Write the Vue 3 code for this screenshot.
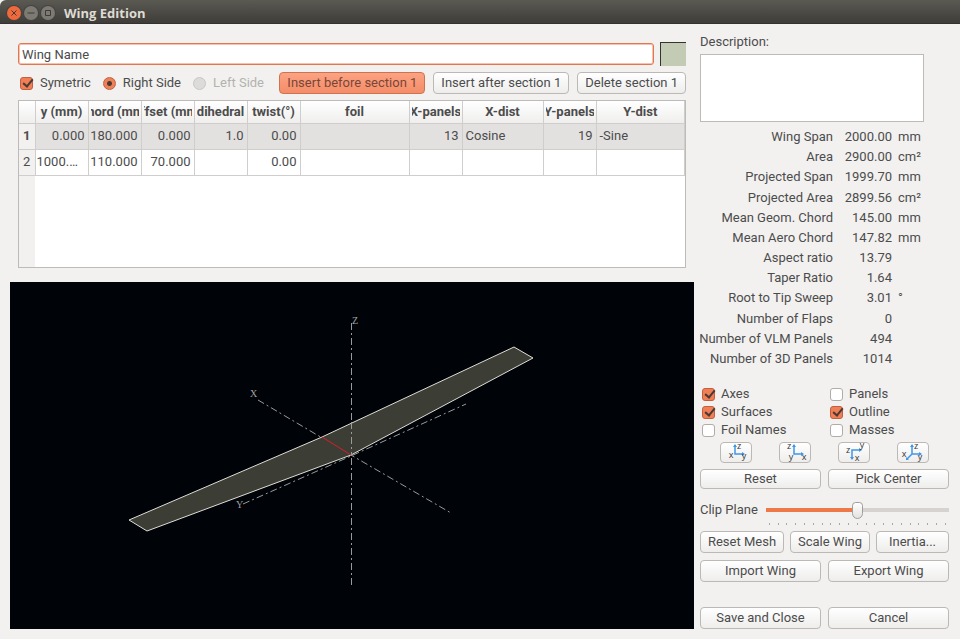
<script setup>
import { ref } from 'vue'

const wingName = ref('Wing Name')
const description = ref('')
const symetric = ref(true)
const side = ref('right')
const clip = ref(50)

const columns = [
  { label: 'y (mm)', cls: 'w-s' },
  { label: 'chord (mm)', cls: 'w-s' },
  { label: 'offset (mm)', cls: 'w-s' },
  { label: 'dihedral', cls: 'w-s' },
  { label: 'twist(°)', cls: 'w-s' },
  { label: 'foil', cls: 'w-l' },
  { label: 'X-panels', cls: 'w-s' },
  { label: 'X-dist', cls: 'w-m' },
  { label: 'Y-panels', cls: 'w-s' },
  { label: 'Y-dist', cls: 'w-a' },
]

const sections = [
  ['0.000', '180.000', '0.000', '1.0', '0.00', '', '13', 'Cosine', '19', '-Sine'],
  ['1000.000', '110.000', '70.000', '', '0.00', '', '', '', '', ''],
]

const stats = [
  ['Wing Span', '2000.00', 'mm'],
  ['Area', '2900.00', 'cm²'],
  ['Projected Span', '1999.70', 'mm'],
  ['Projected Area', '2899.56', 'cm²'],
  ['Mean Geom. Chord', '145.00', 'mm'],
  ['Mean Aero Chord', '147.82', 'mm'],
  ['Aspect ratio', '13.79', ''],
  ['Taper Ratio', '1.64', ''],
  ['Root to Tip Sweep', '3.01', '°'],
  ['Number of Flaps', '0', ''],
  ['Number of VLM Panels', '494', ''],
  ['Number of 3D Panels', '1014', ''],
]

const display = ref([
  { label: 'Axes', on: true },
  { label: 'Panels', on: false },
  { label: 'Surfaces', on: true },
  { label: 'Outline', on: true },
  { label: 'Foil Names', on: false },
  { label: 'Masses', on: false },
])

const views = [
  { name: 'X view', d: 'M14 2V11H23', a: 'M12 4L14 1L16 4ZM21 9L24 11L21 13Z', t: [['z', 18, 6], ['x', 10, 15], ['y', 23, 16]] },
  { name: 'Y view', d: 'M14 2V11H23', a: 'M12 4L14 1L16 4ZM21 9L24 11L21 13Z', t: [['z', 9, 6], ['y', 11, 17], ['x', 24, 17]] },
  { name: 'Z view', d: 'M22 7H13V16', a: 'M20 5L23 7L20 9ZM11 14L13 17L15 14Z', t: [['y', 23, 5], ['z', 9, 10], ['x', 18, 18]] },
  { name: 'Isometric view', d: 'M14 2V11H23M14 11L9 16', a: 'M12 4L14 1L16 4ZM21 9L24 11L21 13ZM8 14L8 17L11 17Z', t: [['z', 18, 6], ['x', 6, 14], ['y', 22, 17]] },
]
</script>

<template>
  <div class="window">
    <header class="titlebar">
      <button class="dot close" aria-label="Close">
        <svg viewBox="0 0 14 14"><path d="M4.5 4.5l5 5M9.5 4.5l-5 5" /></svg>
      </button>
      <button class="dot" aria-label="Minimize">
        <svg viewBox="0 0 14 14"><path d="M3.5 7h7" /></svg>
      </button>
      <button class="dot" aria-label="Maximize">
        <svg viewBox="0 0 14 14"><path d="M4.5 4.5h5v5h-5z" /></svg>
      </button>
      <h1>Wing Edition</h1>
    </header>

    <main>
      <section class="left">
        <div class="editor">
          <div class="name-row">
            <input v-model="wingName" class="name" type="text" aria-label="Wing name" />
            <button class="swatch" aria-label="Wing color"></button>
          </div>

          <div class="options">
            <label class="opt"><input v-model="symetric" type="checkbox" />Symetric</label>
            <label class="opt"><input v-model="side" type="radio" name="side" value="right" />Right Side</label>
            <label class="opt off"><input v-model="side" type="radio" name="side" value="left" disabled />Left Side</label>
            <div class="actions">
              <button class="btn hot">Insert before section 1</button>
              <button class="btn">Insert after section 1</button>
              <button class="btn">Delete section 1</button>
            </div>
          </div>

          <div class="table-box">
            <table>
              <colgroup>
                <col class="w-n" />
                <col v-for="c in columns" :key="c.label" :class="c.cls" />
              </colgroup>
              <thead>
                <tr>
                  <th></th>
                  <th v-for="c in columns" :key="c.label">
                    <div class="clip"><span>{{ c.label }}</span></div>
                  </th>
                </tr>
              </thead>
              <tbody>
                <tr v-for="(row, i) in sections" :key="i" :class="{ current: i === 0 }">
                  <th scope="row">{{ i + 1 }}</th>
                  <td v-for="(v, j) in row" :key="j" :class="{ text: j === 7 || j === 9 }">{{ v }}</td>
                </tr>
              </tbody>
            </table>
            <div class="gutter"></div>
          </div>
        </div>

        <div class="view">
          <svg viewBox="0 0 684 347" preserveAspectRatio="xMidYMid meet">
            <g class="axis">
              <path d="M341.5 41V304" />
              <path d="M248 118L341 173L441 231" />
              <path d="M233 222L341 174L456 122" />
            </g>
            <path class="wing" d="M119 238L312 155L504 65L523 76L341 173L137 249Z" />
            <path class="axis" d="M341.5 140V173" />
            <path class="root" d="M312 155L341 173" />
            <text x="342" y="42">Z</text>
            <text x="240" y="115">X</text>
            <text x="226" y="226">Y</text>
          </svg>
        </div>
      </section>

      <aside class="right">
        <label class="desc" for="desc">Description:</label>
        <textarea id="desc" v-model="description"></textarea>

        <dl class="stats">
          <div v-for="s in stats" :key="s[0]">
            <dt>{{ s[0] }}</dt>
            <dd>{{ s[1] }}</dd>
            <dd class="unit">{{ s[2] }}</dd>
          </div>
        </dl>

        <div class="checks">
          <label v-for="d in display" :key="d.label" class="opt">
            <input v-model="d.on" type="checkbox" />{{ d.label }}
          </label>
        </div>

        <div class="views">
          <button v-for="v in views" :key="v.name" class="btn" :aria-label="v.name">
            <svg viewBox="0 0 30 19">
              <path :d="v.d" />
              <path class="tip" :d="v.a" />
              <text v-for="t in v.t" :key="t[0]" :x="t[1]" :y="t[2]">{{ t[0] }}</text>
            </svg>
          </button>
        </div>

        <div class="pair reset">
          <button class="btn">Reset</button>
          <button class="btn">Pick Center</button>
        </div>

        <div class="clip-row">
          <label for="clip">Clip Plane</label>
          <div class="slider">
            <input id="clip" v-model="clip" type="range" min="0" max="100" />
            <div class="ticks"><i v-for="n in 21" :key="n"></i></div>
          </div>
        </div>

        <div class="tools">
          <button class="btn">Reset Mesh</button>
          <button class="btn">Scale Wing</button>
          <button class="btn">Inertia...</button>
        </div>
        <div class="pair files">
          <button class="btn">Import Wing</button>
          <button class="btn">Export Wing</button>
        </div>
        <div class="pair">
          <button class="btn">Save and Close</button>
          <button class="btn">Cancel</button>
        </div>
      </aside>
    </main>
  </div>
</template>

<style>
body {
  margin: 0;
  background: #f2f1f0;
}
</style>

<style scoped>
* {
  box-sizing: border-box;
}
.window {
  display: flex;
  flex-direction: column;
  min-height: 100vh;
  background: #f2f1f0;
  border-radius: 6px 0 0 0;
  overflow: hidden;
  color: #4c4c4c;
  font: 13px/18px Roboto, "Open Sans", sans-serif;
}
button,
input,
textarea {
  font: inherit;
  color: inherit;
  margin: 0;
}
.titlebar {
  display: flex;
  align-items: center;
  gap: 3px;
  height: 24px;
  padding: 2px 7px 0;
  background: linear-gradient(#5a5952, #3e3d39);
  border-bottom: 1px solid #33322e;
}
.titlebar h1 {
  margin: 0 0 0 6px;
  font: 700 13px/18px "Open Sans", sans-serif;
  color: #dfdbd2;
}
.dot {
  width: 14px;
  height: 14px;
  padding: 0;
  border: 0;
  border-radius: 50%;
  background: #7c7a72;
  box-shadow: 0 0 0 1px #45443f;
}
.dot.close {
  background: #f0693c;
}
.dot svg {
  display: block;
  fill: none;
  stroke: #3c3b37;
  stroke-width: 1;
}
main {
  flex: 1;
  display: flex;
  gap: 6px;
  padding: 9px 11px 10px 10px;
}
.left {
  flex: 1;
  min-width: 0;
  display: flex;
  flex-direction: column;
}
.editor {
  padding: 9px 8px 14px;
}
.name-row {
  display: flex;
  align-items: center;
  gap: 6px;
}
.name {
  flex: 1;
  min-width: 0;
  height: 22px;
  padding: 0 3px;
  border: 1px solid #e2764f;
  border-radius: 3px;
  background: #fff;
  box-shadow: 0 0 0 1px #f3c3b0 inset;
  outline: 0;
}
.swatch {
  width: 26px;
  height: 24px;
  padding: 0;
  border: 0;
  border-top: 1px solid #333;
  border-left: 1px solid #333;
  background: #c3cbb4;
}
.options {
  display: flex;
  align-items: center;
  gap: 12px;
  margin: 6px 0;
  padding-left: 2px;
}
.opt {
  display: flex;
  align-items: center;
  gap: 6px;
  white-space: nowrap;
}
.options .opt {
  gap: 7px;
}
.opt.off {
  color: #b4b2af;
}
.opt input {
  appearance: none;
  flex: none;
  width: 13px;
  height: 13px;
  border: 1px solid #b0aca8;
  border-radius: 3px;
  background: #fff;
}
.opt input[type="radio"] {
  border-radius: 50%;
}
.opt input:checked {
  border-color: #c0603f;
  background: #f07f56;
}
.opt input[type="radio"]:checked {
  background: radial-gradient(circle, #4a3a34 2px, #f07f56 3px);
}
.opt input:disabled {
  border-color: #c9c7c4;
  background: #dddbd9;
}
.opt input[type="checkbox"]:checked::after {
  content: "";
  display: block;
  width: 4px;
  height: 8px;
  margin: -1px 0 0 4px;
  border: solid #4a3a34;
  border-width: 0 2px 2px 0;
  transform: rotate(40deg);
}
.actions {
  display: flex;
  flex: 1;
  justify-content: flex-end;
  gap: 8px;
}
.btn {
  height: 22px;
  padding: 0 7px;
  border: 1px solid #bcb8b4;
  border-radius: 4px;
  background: linear-gradient(#fff, #eeedec);
  white-space: nowrap;
  line-height: 18px;
}
.btn.hot {
  border-color: #cc7450;
  background: linear-gradient(#fca283, #f48d68);
  color: #7a4636;
}
.table-box {
  display: flex;
  flex-direction: column;
  height: 168px;
  border: 1px solid #bdbab7;
  background: #fff;
}
table {
  width: 100%;
  table-layout: fixed;
  border-collapse: collapse;
}
.w-n { width: 16px; }
.w-s { width: 53px; }
.w-m { width: 81px; }
.w-l { width: 109px; }
th,
td {
  height: 26px;
  padding: 0 3px 0 1px;
  border: solid #d0cecc;
  border-width: 0 1px 1px 0;
  overflow: hidden;
  text-overflow: ellipsis;
  white-space: nowrap;
  text-align: right;
}
thead th {
  height: 22px;
  padding: 0 2px;
  background: linear-gradient(#fff, #efeeed);
}
.clip {
  display: flex;
  justify-content: center;
  overflow: hidden;
}
th[scope="row"] {
  padding: 0;
  background: #f2f1f0;
  text-align: center;
  font-weight: 400;
}
.current th[scope="row"] {
  font-weight: 700;
}
.current td {
  background: #e3e1e0;
}
td.text {
  text-align: left;
  padding-left: 3px;
}
.gutter {
  flex: 1;
  width: 16px;
  background: #f2f1f0;
}
.view {
  flex: 1;
  background: #000408;
}
.view svg {
  display: block;
  width: 100%;
}
.axis {
  fill: none;
  stroke: #9a9a9a;
  stroke-width: 1;
  stroke-dasharray: 7 3 2 3;
}
.wing {
  fill: #3c3d34;
  stroke: #deded8;
  stroke-width: 1;
}
.root {
  stroke: #d81e28;
  stroke-width: 1;
}
.view text {
  fill: #a0a0a0;
  font: 10px "Liberation Serif", serif;
}
.right {
  width: 249px;
  display: flex;
  flex-direction: column;
}
.desc {
  margin-bottom: 3px;
}
textarea {
  width: 224px;
  height: 68px;
  border: 1px solid #bdbab7;
  background: #fff;
  resize: none;
  outline: 0;
}
.stats {
  flex: 1;
  display: flex;
  flex-direction: column;
  margin: 5px 0 16px;
}
.stats > div {
  flex: 1;
  display: grid;
  grid-template-columns: 133px 53px 1fr;
  column-gap: 6px;
  align-items: center;
}
.stats dt,
.stats dd {
  display: flex;
  justify-content: flex-end;
  margin: 0;
  white-space: nowrap;
}
.stats .unit {
  justify-content: flex-start;
}
.checks {
  display: grid;
  grid-template-columns: 1fr 1fr;
  column-gap: 9px;
  padding-left: 2px;
  margin-bottom: 3px;
}
.views {
  display: flex;
  justify-content: space-between;
  padding: 0 20px;
  margin-bottom: 6px;
}
.views .btn {
  width: 32px;
  height: 21px;
  padding: 0;
}
.views svg {
  display: block;
  width: 30px;
  height: 19px;
}
.views path {
  fill: none;
  stroke: #3f97e6;
  stroke-width: 1.5;
}
.views .tip {
  fill: #3f97e6;
  stroke: none;
}
.views text {
  fill: #333;
  font: 9px "Open Sans", sans-serif;
  text-anchor: middle;
}
.pair {
  display: grid;
  grid-template-columns: 1fr 1fr;
  gap: 7px;
}
.pair .btn {
  padding: 0;
}
.reset .btn {
  height: 20px;
}
.clip-row {
  display: flex;
  gap: 8px;
  margin: 12px 0 6px;
}
.slider {
  flex: 1;
}
.slider input {
  appearance: none;
  display: block;
  width: 100%;
  height: 18px;
  background: linear-gradient(90deg, #ef7848 50%, #d5d2cf 50%) center / 100% 4px no-repeat;
}
.slider input::-webkit-slider-thumb {
  appearance: none;
  width: 11px;
  height: 17px;
  border: 1px solid #a09c98;
  border-radius: 4px 4px 6px 6px;
  background: linear-gradient(#fff, #e4e2e0);
}
.ticks {
  display: flex;
  justify-content: space-between;
  padding: 4px 3px 0;
}
.ticks i {
  width: 1px;
  height: 2px;
  background: #aaa6a2;
}
.tools {
  display: grid;
  grid-template-columns: 84px 80px 1fr;
  gap: 6px;
  margin-bottom: 7px;
}
.tools .btn {
  padding: 0;
}
.files {
  margin-bottom: 25px;
}
</style>
